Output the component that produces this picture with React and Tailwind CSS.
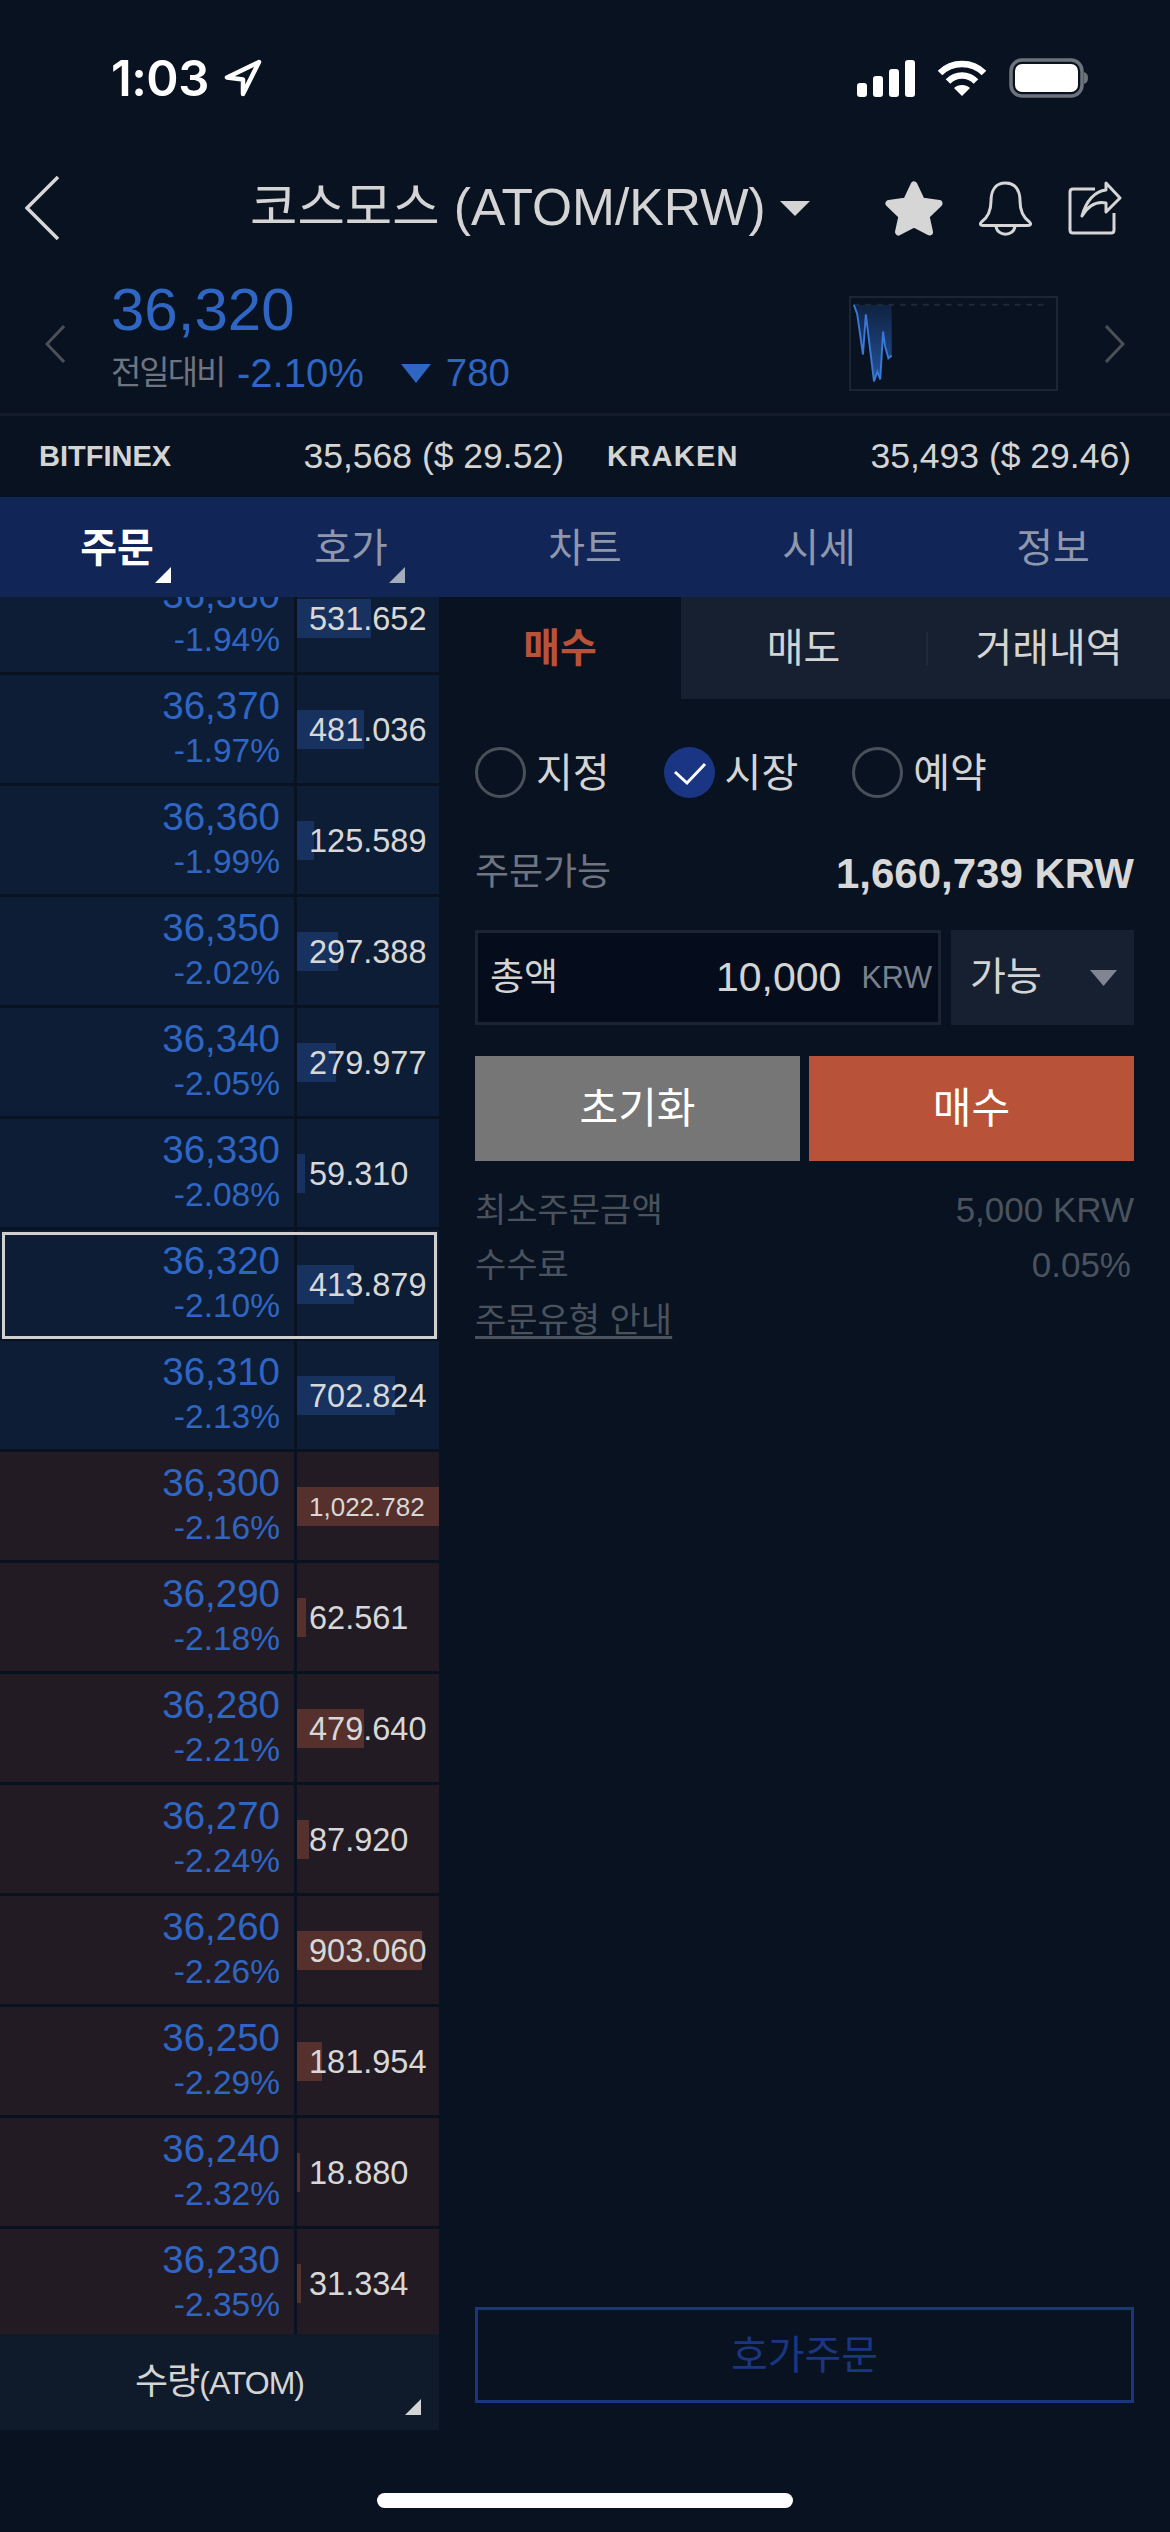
import React from "react";

const KR = { fontFamily: '"Liberation Sans", "Noto Sans CJK KR", sans-serif' };

const rows = [
  ["36,380", "-1.94%", "531.652", 74, "buy"],
  ["36,370", "-1.97%", "481.036", 67, "buy"],
  ["36,360", "-1.99%", "125.589", 17, "buy"],
  ["36,350", "-2.02%", "297.388", 41, "buy"],
  ["36,340", "-2.05%", "279.977", 39, "buy"],
  ["36,330", "-2.08%", "59.310", 8, "buy"],
  ["36,320", "-2.10%", "413.879", 57, "buy"],
  ["36,310", "-2.13%", "702.824", 98, "buy"],
  ["36,300", "-2.16%", "1,022.782", 142, "sell"],
  ["36,290", "-2.18%", "62.561", 9, "sell"],
  ["36,280", "-2.21%", "479.640", 67, "sell"],
  ["36,270", "-2.24%", "87.920", 12, "sell"],
  ["36,260", "-2.26%", "903.060", 125, "sell"],
  ["36,250", "-2.29%", "181.954", 25, "sell"],
  ["36,240", "-2.32%", "18.880", 3, "sell"],
  ["36,230", "-2.35%", "31.334", 4, "sell"],
];

function StatusBar() {
  return (
    <div className="h-[156px] flex justify-between items-start pt-[58px] pl-[111px] pr-[82px]">
      <div className="flex items-center gap-[15px] h-[40px]">
        <span className="text-[49px] font-semibold text-white leading-none tracking-[-0.5px]" style={{ fontFamily: "Inter, sans-serif" }}>1:03</span>
        <svg width="38" height="38" viewBox="0 0 38 38" fill="none">
          <path d="M35 3 L3 18.5 L19 20.5 L19 35 Z" stroke="#fff" strokeWidth="4.5" strokeLinejoin="round" />
        </svg>
      </div>
      <div className="flex items-center gap-[22px] h-[40px]">
        <svg width="58" height="37" viewBox="0 0 58 37" fill="#fff">
          <rect x="0" y="23" width="10" height="14" rx="3" />
          <rect x="16" y="16" width="10" height="21" rx="3" />
          <rect x="32" y="9" width="10" height="28" rx="3" />
          <rect x="48" y="0" width="10" height="37" rx="3" />
        </svg>
        <svg width="50" height="37" viewBox="0 0 50 37" fill="none" stroke="#fff" strokeWidth="6.5">
          <path d="M3 13 C15 1 35 1 47 13" />
          <path d="M11 21.5 C19 13.5 31 13.5 39 21.5" />
          <path d="M25 36 L17 28 C21 24 29 24 33 28 Z" fill="#fff" stroke="none" />
        </svg>
        <svg width="79" height="40" viewBox="0 0 79 40" fill="none">
          <rect x="2" y="2" width="71" height="36" rx="11" stroke="#6d737b" strokeWidth="3.5" />
          <rect x="6" y="6" width="63" height="28" rx="7" fill="#fff" />
          <path d="M75 14 C78 15 79 17 79 20 C79 23 78 25 75 26 Z" fill="#6d737b" />
        </svg>
      </div>
    </div>
  );
}

function TitleBar() {
  return (
    <div className="h-[104px] flex items-center pl-[25px] pr-[48px] relative">
      <svg width="34" height="64" viewBox="0 0 34 64" fill="none" className="shrink-0">
        <path d="M33 1 L2 32 L33 63" stroke="#d6d6d6" strokeWidth="3.5" />
      </svg>
      <div className="ml-[191px] flex items-center">
        <span className="text-[51.5px] text-[#d4d4d4] leading-none whitespace-nowrap" style={KR}>코스모스 (ATOM/KRW)</span>
        <svg width="30" height="15" viewBox="0 0 30 15" className="ml-[14px]">
          <path d="M0 0 H30 L15 15 Z" fill="#d4d4d4" />
        </svg>
      </div>
      <div className="ml-auto flex items-center gap-[36px]">
        <svg width="58" height="55" viewBox="0 0 58 55">
          <path d="M29 4 L36.5 20 L54 22.5 L41 35 L44.5 51 L29 43 L13.5 51 L17 35 L4 22.5 L21.5 20 Z" fill="#d6d6d6" stroke="#d6d6d6" strokeWidth="7" strokeLinejoin="round" />
        </svg>
        <svg width="53" height="55" viewBox="0 0 53 55" fill="none" stroke="#d6d6d6" strokeWidth="3">
          <path d="M26.5 2 C16 2 12 10 12 20 C12 31 8 37 2.5 41 C0.5 43 1.5 44.5 4 44.5 H49 C51.5 44.5 52.5 43 50.5 41 C45 37 41 31 41 20 C41 10 37 2 26.5 2 Z" />
          <path d="M17 45 C18 56 35 56 36 45" />
        </svg>
        <svg width="54" height="54" viewBox="0 0 54 54" fill="none" stroke="#d6d6d6" strokeWidth="3">
          <path d="M27 8 H5 C3 8 2 9 2 11 V49 C2 51 3 52 5 52 H43 C45 52 46 51 46 49 V32" />
          <path d="M14 35 C18 20 27 10 38 9 V2 L52 17 L38 31 V22 C28 20 20 25 14 35 Z" strokeLinejoin="round" />
        </svg>
      </div>
    </div>
  );
}

function Sparkline() {
  return (
    <svg width="209" height="95" viewBox="0 0 209 95" fill="none" className="shrink-0 border-2 border-[#1c2532]">
      <defs>
        <linearGradient id="spark" x1="0" y1="0" x2="0" y2="1">
          <stop offset="0" stopColor="#0f2240" />
          <stop offset="1" stopColor="#24539c" />
        </linearGradient>
      </defs>
      <path d="M0.5 7 L4 17 L10 59 L13 17 L21.5 87 L25 77 L28 85 L31 35 L33 50 L36.5 63 L40 60 V7 Z" fill="url(#spark)" />
      <path d="M0.5 7 H200" stroke="#1f2937" strokeWidth="2" strokeDasharray="6 6" />
      <path d="M0.5 7 L4 17 L10 59 L13 17 L21.5 87 L25 77 L28 85 L31 35 L33 50 L36.5 63 L40 60" stroke="#3a78d8" strokeWidth="2" />
    </svg>
  );
}

function TickerRow() {
  return (
    <div className="h-[153px] pt-[14px] flex items-center pl-[45px] pr-[45px]">
      <svg width="20" height="38" viewBox="0 0 20 38" fill="none" className="shrink-0">
        <path d="M19 1 L2 19 L19 37" stroke="#4a4f58" strokeWidth="3" />
      </svg>
      <div className="ml-[46px] -mt-[14px]">
        <div className="text-[60px] leading-[70px] text-[#2f66c4]" style={KR}>36,320</div>
        <div className="flex items-center h-[50px] mt-[3px]">
          <span className="text-[33px] text-[#6f7480] tracking-[-2px] w-[126px]" style={KR}>전일대비</span>
          <span className="text-[40px] text-[#2f66c4]" style={KR}>-2.10%</span>
          <svg width="30" height="19" viewBox="0 0 30 19" className="ml-[37px]">
            <path d="M0 0 H30 L15 19 Z" fill="#2f66c4" />
          </svg>
          <span className="ml-[15px] text-[38.5px] text-[#2f66c4]" style={KR}>780</span>
        </div>
      </div>
      <div className="ml-auto mr-[47px]">
        <Sparkline />
      </div>
      <svg width="20" height="38" viewBox="0 0 20 38" fill="none" className="shrink-0">
        <path d="M1 1 L18 19 L1 37" stroke="#4a4f58" strokeWidth="3" />
      </svg>
    </div>
  );
}

function ExchangeRow() {
  return (
    <div className="h-[84px] border-t-[3px] border-[#141c29] flex items-center text-[#d4d4d4]" style={KR}>
      <div className="w-[607px] pl-[39px] pr-[43px] flex justify-between items-center">
        <span className="text-[29px] font-bold">BITFINEX</span>
        <span className="text-[35.5px]">35,568 ($ 29.52)</span>
      </div>
      <div className="flex-1 pr-[39px] flex justify-between items-center">
        <span className="text-[29px] font-bold tracking-[1.3px]">KRAKEN</span>
        <span className="text-[35.5px]">35,493 ($ 29.46)</span>
      </div>
    </div>
  );
}

function Corner({ color, className }) {
  return (
    <svg width="16" height="16" viewBox="0 0 16 16" className={className}>
      <path d="M16 0 V16 H0 Z" fill={color} />
    </svg>
  );
}

function MainTabs() {
  const tabs = ["주문", "호가", "차트", "시세", "정보"];
  return (
    <div className="h-[100px] bg-[#112557] grid grid-cols-5" style={KR}>
      {tabs.map((t, i) => (
        <div key={t} className={`relative flex items-center justify-center text-[40px] pt-[2px] ${i === 0 ? "font-bold text-white" : "text-[#8e97ab]"}`}>
          {t}
          {i === 0 && <Corner color="#ffffff" className="absolute left-[155px] top-[70px]" />}
          {i === 1 && <Corner color="#a3abbc" className="absolute left-[155px] top-[70px]" />}
        </div>
      ))}
    </div>
  );
}

function OrderRow({ row, selected }) {
  const [price, pct, qty, bar, side] = row;
  const sell = side === "sell";
  return (
    <div className="relative flex h-[108px] mb-[3px]">
      <div className={`w-[294px] pr-[14px] text-right ${sell ? "bg-[#231b23]" : "bg-[#0d1d35]"} text-[#2f66c4]`}>
        <div className="text-[38.5px] leading-[44px] pt-[9px]">{price}</div>
        <div className="text-[33.5px] leading-[44px] mt-[1px]">{pct}</div>
      </div>
      <div className={`ml-[3px] flex-1 relative flex items-center pl-[12px] text-[#d8d8d8] ${sell ? "bg-[#231b23]" : "bg-[#0d1d35]"}`}>
        <div className={`absolute left-0 top-[35px] h-[39px] ${sell ? "bg-[#56302d]" : "bg-[#17325f]"}`} style={{ width: bar }} />
        <span className={`relative pt-[2px] ${qty.length > 8 ? "text-[26px]" : "text-[32.5px]"}`}>{qty}</span>
      </div>
      {selected && <div className="absolute left-[2px] right-[2px] top-[2px] h-[107px] border-[3px] border-[#d0d0d0]" />}
    </div>
  );
}

function OrderBook() {
  return (
    <div className="w-[439px] shrink-0 flex flex-col h-[1833px]" style={KR}>
      <div className="h-[1737px] overflow-hidden">
        <div className="-mt-[33px]">
          {rows.map((r) => (
            <OrderRow key={r[0]} row={r} selected={r[0] === "36,320"} />
          ))}
        </div>
      </div>
      <div className="h-[96px] bg-[#0f1a2b] relative flex items-center justify-center text-[#d4d4d4]">
        <span className="text-[36px] tracking-[-1px]">수량<span className="text-[32px]">(ATOM)</span></span>
        <Corner color="#d4d4d4" className="absolute right-[18px] bottom-[15px]" />
      </div>
    </div>
  );
}

function Radio({ label, checked }) {
  return (
    <div className="flex items-center gap-[10px]">
      {checked ? (
        <svg width="51" height="51" viewBox="0 0 51 51">
          <circle cx="25.5" cy="25.5" r="25.5" fill="#1a3583" />
          <path d="M11 25 L23 36 L41 17" fill="none" stroke="#fff" strokeWidth="3" />
        </svg>
      ) : (
        <div className="w-[51px] h-[51px] rounded-full border-[3px] border-[#4a505a]" />
      )}
      <span className="text-[40px] text-[#d4d4d4]">{label}</span>
    </div>
  );
}

function OrderPanel() {
  return (
    <div className="flex-1 h-[1833px] flex flex-col" style={KR}>
      <div className="h-[102px] flex items-center text-[40px] text-[#d4d4d4]">
        <div className="w-[242px] h-full flex items-center justify-center font-bold text-[#b85239]">매수</div>
        <div className="flex-1 h-full bg-[#162030] flex items-center">
          <div className="w-[245px] flex justify-center">매도</div>
          <div className="w-[2px] h-[33px] bg-[#1f2a3a]" />
          <div className="flex-1 flex justify-center">거래내역</div>
        </div>
      </div>
      <div className="flex-1 px-[36px] flex flex-col">
        <div className="flex items-center gap-[54px] mt-[48px] h-[51px]">
          <Radio label="지정" />
          <Radio label="시장" checked />
          <Radio label="예약" />
        </div>
        <div className="flex justify-between items-center mt-[49px] h-[52px]">
          <span className="text-[37px] text-[#6f7480]">주문가능</span>
          <span className="text-[42px] font-bold text-[#d8d8d8]">1,660,739 KRW</span>
        </div>
        <div className="flex gap-[10px] mt-[31px] h-[95px]">
          <div className="w-[466px] border-[3px] border-[#1a2433] bg-[#050d1c] flex items-center pl-[12px] pr-[6px]">
            <span className="text-[37px] text-[#d4d4d4]">총액</span>
            <span className="ml-auto text-[41px] text-[#d4d4d4]">10,000</span>
            <span className="ml-[20px] text-[30.5px] text-[#7a808c]">KRW</span>
          </div>
          <div className="flex-1 bg-[#162030] flex items-center pl-[19px] pr-[17px]">
            <span className="text-[39px] text-[#d4d4d4]">가능</span>
            <svg width="27" height="16" viewBox="0 0 27 16" className="ml-auto">
              <path d="M0 0 H27 L13.5 16 Z" fill="#7f8592" />
            </svg>
          </div>
        </div>
        <div className="flex gap-[9px] mt-[31px] h-[105px] text-[42px] text-white">
          <div className="flex-1 bg-[#767676] flex items-center justify-center">초기화</div>
          <div className="flex-1 bg-[#b85239] flex items-center justify-center">매수</div>
        </div>
        <div className="flex justify-between items-center mt-[27px] h-[44px] text-[#4a525e]">
          <span className="text-[34px]">최소주문금액</span>
          <span className="text-[35px]">5,000 KRW</span>
        </div>
        <div className="flex justify-between items-center mt-[11px] h-[44px] text-[#4a525e]">
          <span className="text-[34px]">수수료</span>
          <span className="text-[35px] pr-[3px]">0.05%</span>
        </div>
        <div className="mt-[11px] h-[44px] flex items-center text-[34px] text-[#4a525e] underline underline-offset-4">주문유형 안내</div>
        <div className="mt-auto mb-[27px] h-[96px] border-[3px] border-[#1b3680] flex items-center justify-center text-[40px] text-[#1b3680]">호가주문</div>
      </div>
    </div>
  );
}

export default function App() {
  return (
    <div className="w-[1170px] h-[2532px] bg-[#081220] overflow-hidden flex flex-col">
      <StatusBar />
      <TitleBar />
      <TickerRow />
      <ExchangeRow />
      <MainTabs />
      <div className="flex">
        <OrderBook />
        <OrderPanel />
      </div>
      <div className="flex justify-center mt-[63px]">
        <div className="w-[416px] h-[15px] rounded-full bg-white" />
      </div>
    </div>
  );
}
